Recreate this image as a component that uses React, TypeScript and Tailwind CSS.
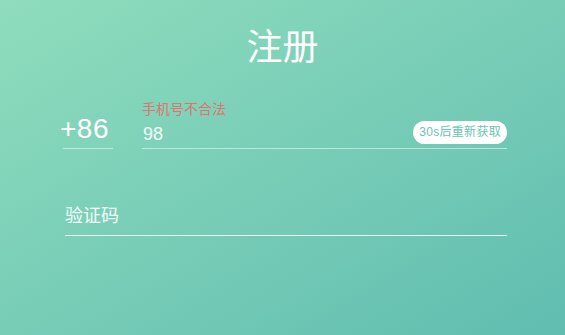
export default function App() {
  return (
    <div className="h-[335px] w-full overflow-hidden bg-linear-to-br from-[#8fddbd] to-[#60bdb0] font-['Liberation_Sans','Noto_Sans_CJK_SC',sans-serif] text-white">
      <h1 className="pt-[30px] text-center text-[36px] leading-[36px] font-normal">注册</h1>

      <div className="mt-[33px] ml-[63px] mr-[58px] flex items-end gap-[29px]">
        <div className="w-[50px] border-b border-white/50 pb-[3px]">
          <span className="-ml-[3px] block text-[28px] leading-[32px] tracking-[0.5px]">+86</span>
        </div>
        <div className="flex flex-1 flex-col border-b border-white/50 pb-[4px]">
          <p className="text-[14px] leading-[20px] text-[#dc7670]">手机号不合法</p>
          <div className="mt-[1px] flex h-[24px] items-center justify-between">
            <span className="pl-[1px] pt-[3px] text-[18px] leading-[24px] text-white/90">98</span>
            <button
              type="button"
              className="h-[23px] rounded-full bg-white px-[6px] text-[12px] leading-[23px] tracking-[0.3px] text-[#6bc4b2]"
            >
              30s后重新获取
            </button>
          </div>
        </div>
      </div>

      <div className="mt-[55px] ml-[65px] mr-[58px] border-b border-white/80 pb-[7px]">
        <span className="block text-[18px] leading-[24px] text-white/90">验证码</span>
      </div>
    </div>
  );
}
